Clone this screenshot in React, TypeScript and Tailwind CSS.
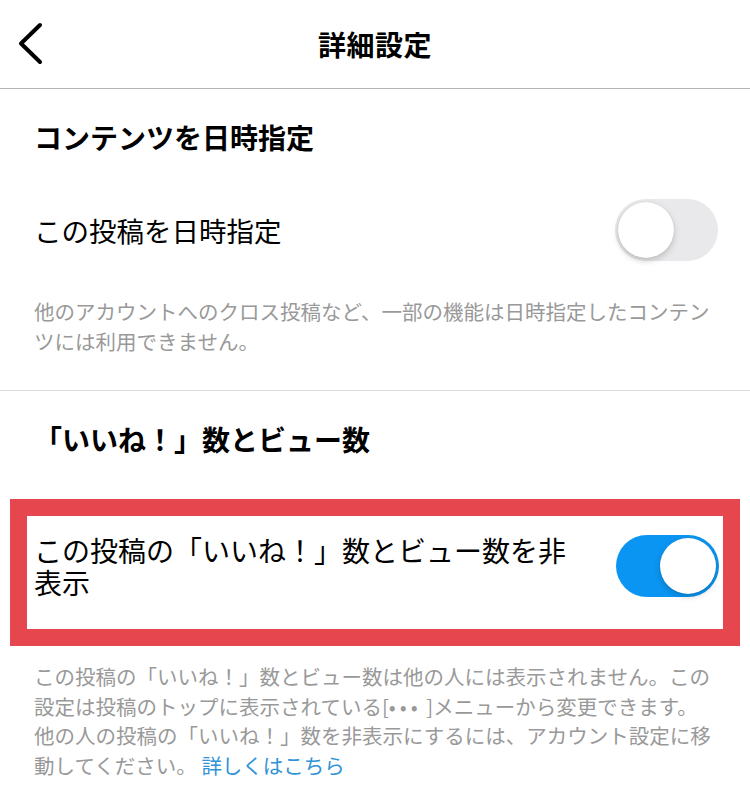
import React from 'react';

const font = { fontFamily: '"Noto Sans CJK JP", "Noto Sans", sans-serif' };

function Toggle({ on }: { on: boolean }) {
  return (
    <div
      className={`relative w-[103px] h-[62px] shrink-0 rounded-full ${
        on ? 'bg-[#0a95f2]' : 'bg-[#e9e9eb]'
      }`}
    >
      <div
        className={`absolute top-[3px] w-[56px] h-[56px] rounded-full bg-white shadow-[0_3px_6px_rgba(0,0,0,0.18),0_0_1px_rgba(0,0,0,0.2)] ${
          on ? 'right-[3px]' : 'left-[3px]'
        }`}
      />
    </div>
  );
}

export default function App() {
  return (
    <div className="w-[750px] min-h-[806px] bg-white text-black" style={font}>
      {/* header */}
      <header className="relative h-[89px] flex items-center justify-center border-b border-[#b3b3b3]">
        <svg
          className="absolute left-[13px] top-[19px]"
          width="34"
          height="50"
          viewBox="0 0 34 50"
          fill="none"
        >
          <path d="M27 6 L8 24.5 L27 43" stroke="#000" strokeWidth="4" strokeLinecap="round" strokeLinejoin="round" />
        </svg>
        <h1 className="text-[28px] font-bold leading-[40px] tracking-[0.5px]">詳細設定</h1>
      </header>

      {/* schedule section */}
      <section className="border-b border-[#dcdcdc] pb-[34px]">
        <h2 className="pl-[34px] pt-[28px] text-[28px] font-bold leading-[40px]">コンテンツを日時指定</h2>
        <div className="flex items-center justify-between pl-[34px] pr-[32px] mt-[42px]">
          <span className="text-[27.5px] leading-[40px]">この投稿を日時指定</span>
          <Toggle on={false} />
        </div>
        <p className="pl-[34px] pr-[20px] mt-[35px] text-[20.5px] leading-[30px] text-[#999999]">
          <span className="block whitespace-nowrap">他のアカウントへのクロス投稿など、一部の機能は日時指定したコンテン</span>
          <span className="block whitespace-nowrap">ツには利用できません。</span>
        </p>
      </section>

      {/* likes section */}
      <section className="pb-[30px]">
        <h2 className="pl-[34px] pt-[28px] text-[28px] font-bold leading-[40px]">「いいね！」数とビュー数</h2>

        <div className="mx-[10px] mt-[40px] border-[17px] border-[#e6474f]">
          <div className="flex items-center pl-[7px] pr-[4px] pt-[18px] pb-[31px]">
            <span className="w-[550px] text-[28px] leading-[32px]">この投稿の「いいね！」数とビュー数を非表示</span>
            <div className="ml-auto">
              <Toggle on={true} />
            </div>
          </div>
        </div>

        <p className="pl-[34px] pr-[20px] mt-[16px] text-[20.5px] leading-[29.5px] text-[#999999]">
          <span className="block whitespace-nowrap">この投稿の「いいね！」数とビュー数は他の人には表示されません。この</span>
          <span className="block whitespace-nowrap">
            設定は投稿のトップに表示されている[<span className="tracking-[4px]">•••</span> ]メニューから変更できます。
          </span>
          <span className="block whitespace-nowrap">他の人の投稿の「いいね！」数を非表示にするには、アカウント設定に移</span>
          <span className="block whitespace-nowrap">
            動してください。 <a href="#" className="text-[#2f93d6]">詳しくはこちら</a>
          </span>
        </p>
      </section>
    </div>
  );
}
